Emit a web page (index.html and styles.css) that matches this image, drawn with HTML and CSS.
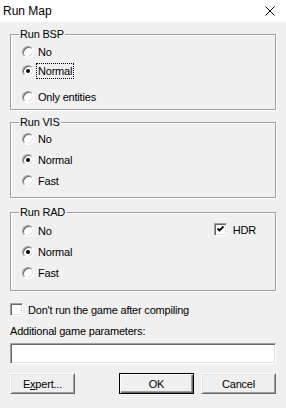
FILE: index.html
```html
<!DOCTYPE html>
<html lang="en">
<head>
	<meta charset="UTF-8">
	<title>Run Map</title>
	<link rel="stylesheet" href="styles.css">
</head>
<body>

<div class="dlg">
	<div class="titlebar">
		<span class="title">Run Map</span>
		<span class="close">
			<svg width="10" height="10" viewBox="0 0 10 10"><path d="M0.5 0.5L9.5 9.5M9.5 0.5L0.5 9.5" stroke="#000" stroke-width="1" fill="none"/></svg>
		</span>
	</div>
	<div class="body">
		<fieldset class="grp grp_bsp">
			<legend>Run BSP</legend>
			<label class="opt"><span class="radio"></span>No</label>
			<label class="opt"><span class="radio on"></span><span class="focus">Normal</span></label>
			<label class="opt opt_far"><span class="radio"></span>Only entities</label>
		</fieldset>

		<fieldset class="grp grp_vis">
			<legend>Run VIS</legend>
			<label class="opt"><span class="radio"></span>No</label>
			<label class="opt"><span class="radio on"></span>Normal</label>
			<label class="opt"><span class="radio"></span>Fast</label>
		</fieldset>

		<fieldset class="grp grp_rad">
			<legend>Run RAD</legend>
			<div class="cols">
				<div class="opts">
					<label class="opt"><span class="radio"></span>No</label>
					<label class="opt"><span class="radio on"></span>Normal</label>
					<label class="opt"><span class="radio"></span>Fast</label>
				</div>
				<label class="chk_row hdr">
					<span class="chk">
						<svg width="9" height="9" viewBox="0 0 9 9"><path d="M1.5 3.5L3.5 5.5L7.5 1.5" stroke="#000" stroke-width="1.8" fill="none"/></svg>
					</span>HDR
				</label>
			</div>
		</fieldset>

		<label class="chk_row norun"><span class="chk"></span>Don't run the game after compiling</label>

		<div class="params_lbl">Additional game parameters:</div>
		<div class="edit"></div>

		<div class="btns">
			<span class="btn btn_expert">E<u>x</u>pert...</span>
			<span class="btn btn_ok">OK</span>
			<span class="btn">Cancel</span>
		</div>
	</div>
</div>

</body>
</html>
```

FILE: styles.css
```css
*{margin:0; padding:0; box-sizing: border-box;}
body{ background: #f0f0f0; font-family: "Liberation Sans", Arial, sans-serif; font-size: 11px; letter-spacing: -0.2px; color: #000; }
.dlg{ width: 286px; height: 408px; background: #f0f0f0; }

/*title bar*/
.titlebar{ height: 22px; background: #fff; display: flex; align-items: center; justify-content: space-between; padding: 0 11px 0 3px; }
.title{ font-size: 12px; letter-spacing: 0; }
.close{ display: flex; }

.body{ padding: 6px 10px 0 10px; }

/*group boxes*/
.grp{ margin: 0; min-width: 0; border: 1px solid #a0a0a0; box-shadow: inset 1px 1px 0 #fff, 1px 1px 0 #fff; padding: 4px 0 5px 11px; }
.grp legend{ margin-left: -3px; padding: 0 1px; line-height: 13px; background: #f0f0f0; }
.grp_vis{ margin-top: 6px; padding-top: 3px; padding-bottom: 9px; }
.grp_rad{ margin-top: 8px; padding-top: 5px; padding-bottom: 10px; }

.opt{ display: flex; align-items: center; height: 14px; }
.opt + .opt{ margin-top: 7px; }
.grp_bsp .opt + .opt{ margin-top: 5px; }
.grp_bsp .opt.opt_far{ margin-top: 12px; }

.radio{ position: relative; width: 12px; height: 12px; margin-right: 4px; border-radius: 50%; background: #fff; border: 1px solid; border-color: #a0a0a0 #fff #fff #a0a0a0; box-shadow: inset 1px 1px 0 #696969, inset -1px -1px 0 #e3e3e3; }
.radio.on::after{ content: ""; position: absolute; left: 3px; top: 3px; width: 4px; height: 4px; border-radius: 50%; background: #000; }
.focus{ border: 1px dotted #000; padding: 0 1px; margin-left: -2px; line-height: 14px; }

.cols{ display: flex; align-items: flex-start; }
.hdr{ margin-left: auto; margin-right: 19px; margin-top: -1px; }

/*check boxes*/
.chk_row{ display: flex; align-items: center; height: 13px; }
.chk{ display: flex; align-items: center; justify-content: center; width: 13px; height: 13px; margin-right: 5px; background: #fff; border: 1px solid; border-color: #a0a0a0 #fff #fff #a0a0a0; box-shadow: inset 1px 1px 0 #696969, inset -1px -1px 0 #e3e3e3; }
.hdr .chk{ margin-right: 6px; }
.norun{ margin-top: 12px; }

.params_lbl{ margin-top: 9px; line-height: 13px; }
.edit{ margin-top: 5px; height: 21px; background: #fff; border: 1px solid; border-color: #a0a0a0 #fff #fff #a0a0a0; box-shadow: inset 1px 1px 0 #696969, inset -1px -1px 0 #e3e3e3; }

/*buttons*/
.btns{ display: flex; margin-top: 9px; }
.btn{ display: flex; align-items: center; justify-content: center; width: 75px; height: 21px; background: #f0f0f0; border: 1px solid; border-color: #fff #696969 #696969 #fff; box-shadow: inset 1px 1px 0 #e3e3e3, inset -1px -1px 0 #a0a0a0; }
.btn_expert{ width: 65px; }
.btn_ok{ margin-left: auto; margin-right: 7px; border-color: #000; box-shadow: inset 1px 1px 0 #fff, inset -1px -1px 0 #696969, inset -2px -2px 0 #a0a0a0; }
```
